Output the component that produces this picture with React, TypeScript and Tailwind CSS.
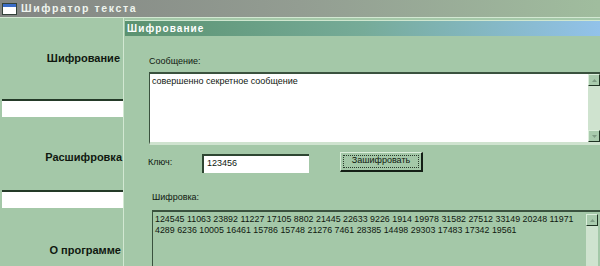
import React from "react";

const font = "font-['Liberation_Sans','DejaVu_Sans',sans-serif]";

function ScrollButton({ down }: { down?: boolean }) {
  return (
    <div className="w-[12px] h-[12px] bg-[#a9cbad] border border-[#dcefdc] border-r-[#1f3323] border-b-[#1f3323] flex items-center justify-center">
      <svg width="5" height="3" viewBox="0 0 5 3" className={down ? "rotate-180" : ""}>
        <path d="M2.5 0 L5 3 L0 3 Z" fill="#7f9c84" />
      </svg>
    </div>
  );
}

function ScrollBar({ bottom = true }: { bottom?: boolean }) {
  return (
    <div className="w-[12px] bg-[#cfe3cf] flex flex-col justify-between">
      <ScrollButton />
      {bottom && <ScrollButton down />}
    </div>
  );
}

export default function App() {
  const cipher1 =
    "124545 11063 23892 11227 17105 8802 21445 22633 9226 1914 19978 31582 27512 33149 20248 11971";
  const cipher2 = "4289 6236 10005 16461 15786 15748 21276 7461 28385 14498 29303 17483 17342 19561";

  return (
    <div className={`w-[600px] h-[266px] overflow-hidden bg-[#a4c8a8] flex flex-col ${font}`}>
      {/* main title bar */}
      <div className="h-[17px] shrink-0 flex items-center bg-gradient-to-r from-[#838683] via-[#939d92] to-[#a0bd9e]">
        <div className="ml-[2px] w-[15px] h-[12px] border border-[#33423a] bg-white flex flex-col">
          <div className="h-[3px] bg-[#3a6cc8]" />
        </div>
        <span className="ml-[4px] text-[10.5px] font-bold tracking-[1.6px] text-[#eef4ee] leading-none">
          Шифратор текста
        </span>
      </div>
      <div className="h-px shrink-0 bg-[#d2e8d2]" />

      <div className="flex flex-1 min-h-0">
        {/* left menu */}
        <div className="w-[123px] shrink-0 flex flex-col">
          <div className="mt-[33px] h-[14px] text-right pr-[3px] text-[11px] font-bold leading-[14px] text-[#101810]">
            Шифрование
          </div>
          <div className="mt-[34px] ml-[2px] h-[18px] bg-white border-t-2 border-[#243a28]" />
          <div className="mt-[33px] h-[14px] text-right pr-[1px] text-[11px] font-bold leading-[14px] text-[#101810]">
            Расшифровка
          </div>
          <div className="mt-[26px] ml-[2px] h-[18px] bg-white border-t-2 border-[#243a28]" />
          <div className="mt-[35px] h-[14px] text-right pr-[2px] text-[11px] font-bold leading-[14px] text-[#101810]">
            О программе
          </div>
        </div>
        <div className="w-px shrink-0 bg-[#d2e8d2]" />

        {/* inner window */}
        <div className="flex-1 flex flex-col pl-px pt-[2px] min-w-0">
          <div className="h-[16px] shrink-0 border-t border-[#cfe6cf] flex items-center pl-[2px] bg-gradient-to-r from-[#5b9270] via-[#76ab98] to-[#92c2ea]">
            <span className="text-[10px] font-bold tracking-[1.1px] text-white leading-none">Шифрование</span>
          </div>

          <div className="pl-[24px] flex flex-col text-[9px] text-[#101810]">
            <div className="mt-[19px] h-[12px] leading-[12px]">Сообщение:</div>
            <div className="mt-[5px] h-[73px] flex border-t-2 border-l border-[#3a523e] border-b-[3px] border-b-[#cfe3cf] bg-white">
              <div className="flex-1 pl-[2px] pt-[2px] leading-[11px]">совершенно секретное сообщение</div>
              <ScrollBar />
            </div>

            <div className="mt-[8px] h-[20px] flex items-center">
              <span className="w-[54px] -ml-px">Ключ:</span>
              <div className="w-[107px] h-[19px] bg-white border-t-2 border-l-2 border-[#2e4632] flex items-center pl-[3px]">
                123456
              </div>
              <div className="ml-[31px] w-[83px] h-[20px] -mt-[3px] border border-[#dcefdc] border-r-2 border-b-2 border-r-[#141f16] border-b-[#141f16] p-[2px]">
                <div className="w-full h-full border border-dotted border-[#2a3a2c] flex items-center justify-center">
                  Зашифровать
                </div>
              </div>
            </div>

            <div className="mt-[18px] ml-[3px] h-[12px] leading-[12px]">Шифровка:</div>
            <div className="mt-[7px] ml-[3px] h-[70px] flex border-t-2 border-l border-[#3a523e]">
              <div className="flex-1 pl-[2px] pt-[2px] text-[8.85px] leading-[11px] whitespace-nowrap overflow-hidden">
                <div>{cipher1}</div>
                <div>{cipher2}</div>
              </div>
              <div className="pt-[2px] pr-[2px] flex">
                <ScrollBar bottom={false} />
              </div>
            </div>
          </div>
        </div>
      </div>
    </div>
  );
}
